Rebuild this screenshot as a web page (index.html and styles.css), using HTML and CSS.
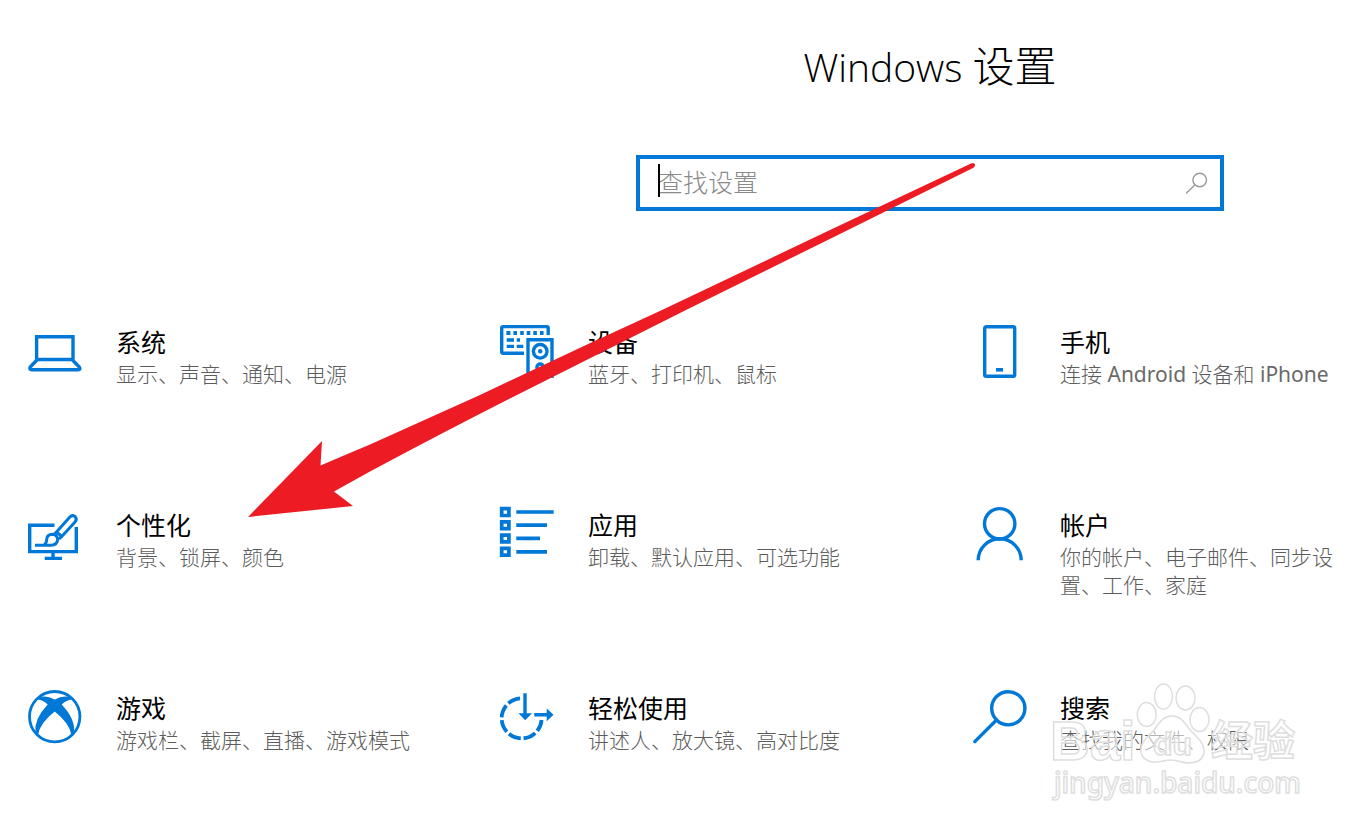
FILE: index.html
```html
<!DOCTYPE html>
<html lang="zh-CN">
<head>
<meta charset="utf-8">
<title>Windows 设置</title>
<link rel="stylesheet" href="styles.css">
</head>
<body>
<main class="page">
  <header class="header">
    <h1 class="heading">Windows <span class="heading-cjk">设置</span></h1>
    <form class="search" role="search">
      <span class="field">
        <input class="input" id="q" type="text" placeholder="查找设置" aria-label="查找设置">
        <span class="caret"></span>
      </span>
      <svg class="glass" viewBox="0 0 22 22" aria-hidden="true"><circle cx="13.7" cy="8" r="6.8"/><path d="M8.8 13 0 21.500"/></svg>
    </form>
  </header>

  <nav class="grid" aria-label="设置类别">
    <a class="tile" href="#system">
      <svg class="icon" viewBox="0 0 54 54" aria-hidden="true"><path d="M8.6 12.7H45V35.5H8.6ZM9 36 2.2 43Q.8 45.8 4 45.8H50Q53 45.8 51.3 43L44.5 36"/></svg>
      <span class="text"><span class="name">系统</span><span class="desc">显示、声音、通知、电源</span></span>
    </a>
    <a class="tile" href="#devices">
      <svg class="icon" viewBox="0 0 54 54" aria-hidden="true">
        <path d="M48.2 11V4Q48.2 2.6 46.8 2.6H3.2Q1.7 2.6 1.7 4V27.5Q1.7 29.2 3.2 29.2H24M28 54V15.7H52V54"/>
        <path class="solid" d="M6.4 7h4v4h-4zM13.4 7h3.6v4h-3.6zM20.2 7h3.6v4h-3.6zM26.7 7h3.6v4h-3.6zM33.3 7h3.6v4h-3.6zM40 7h3.6v4H40zM6.7 14.3H14v3.4H6.7zM16.7 14.3H20v3.4h-3.3zM6.7 20.7H14V24H6.7zM16.7 20.7h6.6V24h-6.6z"/>
        <circle cx="40.2" cy="27.3" r="6.8"/><circle class="solid" cx="40.2" cy="27.3" r="2.2"/><circle cx="40.2" cy="43.3" r="3.3"/>
      </svg>
      <span class="text"><span class="name">设备</span><span class="desc">蓝牙、打印机、鼠标</span></span>
    </a>
    <a class="tile" href="#phone">
      <svg class="icon" viewBox="0 0 54 54" aria-hidden="true"><rect x="12.7" y="2.7" width="30" height="49.6" rx="1.6"/><path class="solid" d="M24 44h7v3.6h-7z"/></svg>
      <span class="text"><span class="name">手机</span><span class="desc">连接 <span class="latin">Android</span> 设备和 <span class="latin">iPhone</span></span></span>
    </a>
    <a class="tile" href="#personalization">
      <svg class="icon" viewBox="0 0 54 54" aria-hidden="true">
        <path d="M26.5 18.3H1.7V44.6H48.3V20M25 45V51M16.7 51.4H34"/>
        <path d="M28.5 25 41.6 10.2Q44.3 7.4 47 9.5 49.6 12 47 15L33.8 29.4ZM28.5 25 26.3 27.3M33.8 29.4 31 32M7 38.3H22.5Q29.7 38 29.7 32 28.5 27.3 24.5 27.3 19 27.5 18.8 32 18.6 36.5 16 38.3" stroke-width="3"/>
      </svg>
      <span class="text"><span class="name">个性化</span><span class="desc">背景、锁屏、颜色</span></span>
    </a>
    <a class="tile" href="#apps">
      <svg class="icon" viewBox="0 0 54 54" aria-hidden="true"><path d="M1.7 1.7h7.2v6.8H1.7zM1.7 14.9h7.2v6.8H1.7zM1.7 28.1h7.2v6.8H1.7zM1.7 41.3h7.2v6.8H1.7zM16.3 5H53.7M16.3 18.2H47M16.3 31.4H40M16.3 44.8H47" stroke-width="3.700"/></svg>
      <span class="text"><span class="name">应用</span><span class="desc">卸载、默认应用、可选功能</span></span>
    </a>
    <a class="tile" href="#accounts">
      <svg class="icon" viewBox="0 0 54 54" aria-hidden="true"><circle cx="27.7" cy="16.8" r="15.2"/><path d="M6.2 53.3a21.5 21.5 0 0 1 43 0"/></svg>
      <span class="text"><span class="name">帐户</span><span class="desc">你的帐户、电子邮件、同步设置、工作、家庭</span></span>
    </a>
    <a class="tile" href="#gaming">
      <svg class="icon" viewBox="0 0 54 54" aria-hidden="true"><circle cx="26.7" cy="26.7" r="25.2" stroke-width="2.8"/><path class="solid" d="M10 7.500Q18 4.500 26.700 9.500 35.500 4.500 43.500 7.500L45 9.500Q39 9.500 33.700 14.500 47.500 29 46 42.500L43.300 45Q42 33.500 26.700 21.500 11.500 33.500 10 45L7.400 42.500Q6 29 19.700 14.500 14.500 9.500 8.500 9.500Z"/></svg>
      <span class="text"><span class="name">游戏</span><span class="desc">游戏栏、截屏、直播、游戏模式</span></span>
    </a>
    <a class="tile" href="#ease">
      <svg class="icon" viewBox="0 0 54 54" aria-hidden="true"><path d="M20 8.400A20 20 0 1 0 41.600 30" stroke-dasharray="12.800 2.900" stroke-width="3.800"/><path d="M25 3.300V25M34.300 24.700H48"/><path class="solid" d="M18.500 23.200H32L25.200 30.200ZM46.700 18.500V31.200L53.500 24.800Z"/></svg>
      <span class="text"><span class="name">轻松使用</span><span class="desc">讲述人、放大镜、高对比度</span></span>
    </a>
    <a class="tile" href="#search">
      <svg class="icon" viewBox="0 0 54 54" aria-hidden="true"><circle cx="36.300" cy="18.300" r="16.600"/><path d="M24.500 30 2.800 51.600" stroke-linecap="round"/></svg>
      <span class="text"><span class="name">搜索</span><span class="desc">查找我的文件、权限</span></span>
    </a>
  </nav>

  <svg class="arrow" width="728" height="356" viewBox="248 162 728 356" aria-hidden="true">
    <path d="M248 517 322 441 320.500 465.500Q345 455 370 444.500L480 395Q570 352 662 310L830 230 971 163.500Q974 162 975 164.500 975.500 166.500 973 168L848 230 686 310 507 400Q440 434 370 471.500L334 491.500 353 506Z"/>
  </svg>

  <svg class="watermark" width="256" height="124" viewBox="1048 680 256 124" aria-hidden="true">
    <text class="brand" x="1050" y="760">Bai</text>
    <ellipse cx="1146.700" cy="714.500" rx="9.500" ry="12"/>
    <ellipse cx="1163.500" cy="696.500" rx="9" ry="12.500"/>
    <ellipse cx="1185.500" cy="698" rx="9.500" ry="12"/>
    <ellipse cx="1199.500" cy="719.500" rx="9.500" ry="12"/>
    <path d="M1172 716C1182 716 1185 724 1191 731 1198 738 1205 744 1204 753 1202 762 1195 763 1189 763 1182 763 1178 760 1171 760 1164 760 1158 763 1152 762 1144 760 1140 755 1141 748 1142 740 1149 736 1154 730 1160 722 1163 716 1172 716Z"/>
    <text class="du" x="1153" y="755">du</text>
    <text class="cjk" x="1211" y="756">经验</text>
    <text class="url" x="1054" y="793">jingyan.baidu.com</text>
  </svg>
</main>
</body>
</html>
```
FILE: styles.css
```css
* {
  box-sizing: border-box;
}

body {
  margin: 0;
  background: #fff;
  color: #000;
  font-family: "Noto Sans", "Noto Sans CJK SC", sans-serif;
}

.page {
  position: relative;
  min-height: 100vh;
  overflow: hidden;
}

.header {
  display: flex;
  flex-direction: column;
  align-items: center;
  gap: 56px;
  padding: 35px 0 0 488px;
}

.heading {
  margin: 0;
  font-family: "Open Sans", "Noto Sans CJK SC", sans-serif;
  font-size: 39px;
  font-weight: 300;
  line-height: 64px;
}

.heading-cjk {
  font-size: 42px;
  line-height: 1;
}

.search {
  display: flex;
  align-items: center;
  width: 100%;
  max-width: 588px;
  height: 56px;
  padding: 0 12px 0 18px;
  border: 4px solid #0078d7;
}

.field {
  position: relative;
  flex: 1;
}

.input {
  display: block;
  width: 100%;
  height: 48px;
  padding: 0 0 4px;
  border: 0;
  outline: 0;
  background: transparent;
  font-family: "Noto Sans CJK SC", sans-serif;
  font-size: 25px;
  font-weight: 300;
}

.input::placeholder {
  color: #8a8a8a;
  opacity: 1;
}

.caret {
  position: absolute;
  top: 5px;
  left: 0;
  width: 2px;
  height: 33px;
  background: #000;
}

.glass {
  width: 22px;
  height: 22px;
  fill: none;
  stroke: #999;
  stroke-width: 1.4;
}

.grid {
  display: grid;
  grid-template-columns: 59fr 59fr 47fr;
  grid-auto-rows: minmax(93px, auto);
  row-gap: 90px;
  padding: 113px 24px 0 28px;
}

.tile {
  display: flex;
  align-items: flex-start;
  gap: 34px;
  color: inherit;
  text-decoration: none;
}

.icon {
  flex: none;
  width: 54px;
  height: 54px;
  overflow: visible;
  fill: none;
  stroke: #0078d7;
  stroke-width: 3.4;
}

.icon .solid {
  fill: #0078d7;
  stroke: none;
}

.text {
  display: flex;
  flex-direction: column;
  gap: 2px;
}

.name {
  font-family: "Noto Sans CJK SC", sans-serif;
  font-size: 25px;
  line-height: 34px;
}

.desc {
  color: #5c5c5c;
  font-size: 21px;
  font-weight: 300;
  line-height: 28px;
}

.latin {
  color: #6a6a6a;
  font-weight: 400;
}

.arrow {
  position: absolute;
  top: 162px;
  left: 248px;
  fill: #ed1c24;
  pointer-events: none;
}

.watermark {
  position: absolute;
  top: 680px;
  left: 1048px;
  fill: rgba(255, 255, 255, 0.55);
  stroke: #dedede;
  stroke-width: 1.5;
  pointer-events: none;
}

.brand,
.du {
  font-family: "Liberation Sans", sans-serif;
  font-size: 55px;
  font-weight: 700;
}

.du {
  font-size: 32px;
}

.cjk {
  font-family: "Noto Sans CJK SC", sans-serif;
  font-size: 42px;
  font-weight: 700;
}

.url {
  font-family: "Noto Sans", sans-serif;
  font-size: 28px;
  font-weight: 500;
}
```
